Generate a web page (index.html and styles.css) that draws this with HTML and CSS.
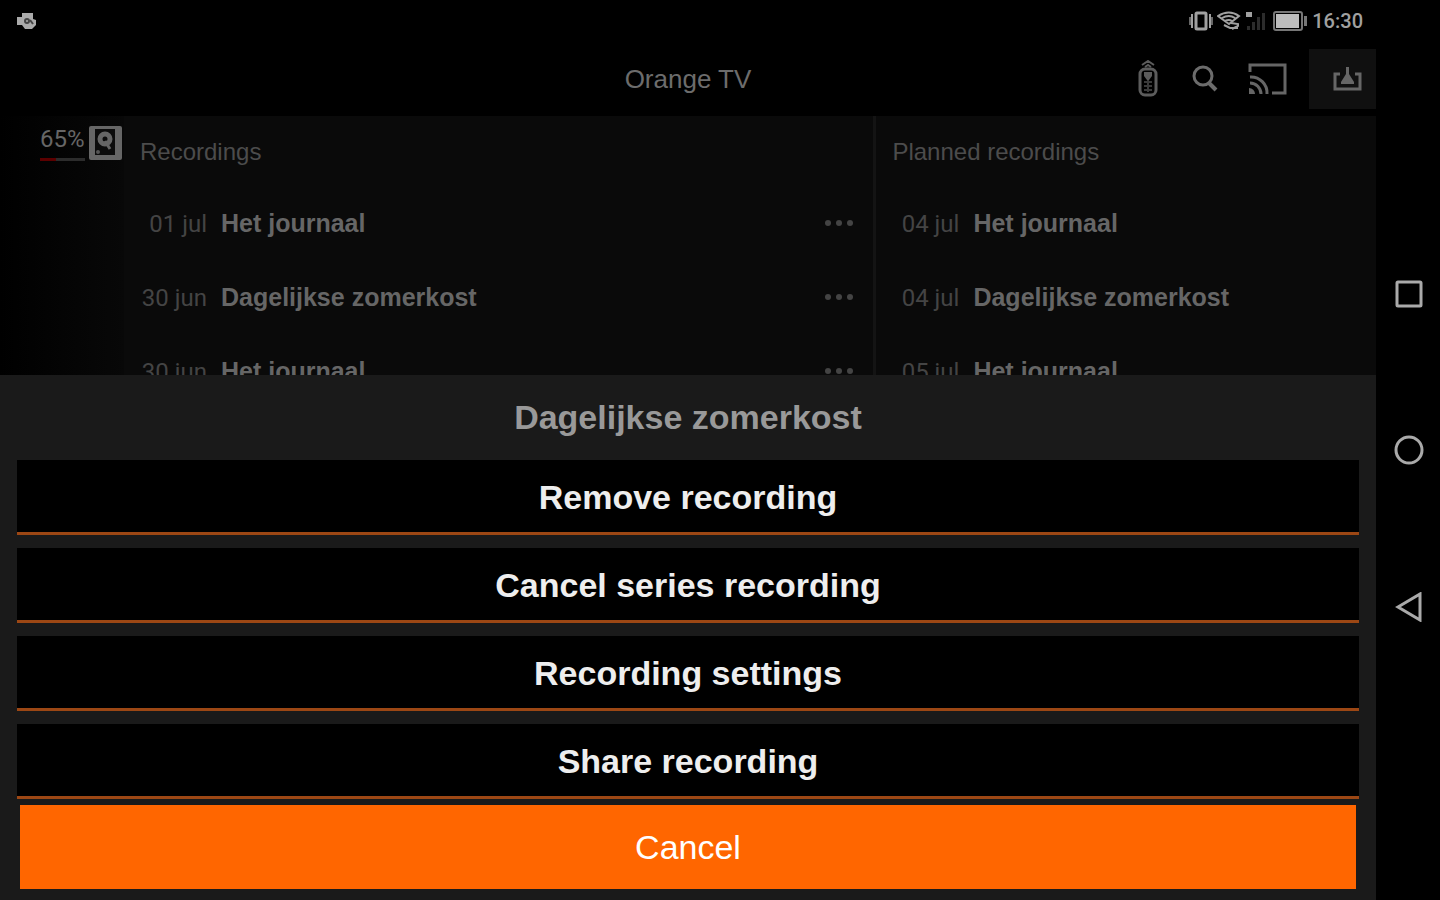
FILE: index.html
```
<!DOCTYPE html>
<html lang="en">

<head>
    <meta charset="UTF-8">
    <meta name="viewport" content="width=device-width, initial-scale=1.0">
    <title>Orange TV</title>
    <link rel="stylesheet" href="styles.css">
</head>

<body>
    <div class="screen">
        <div class="status-bar">
            <svg class="camera" width="22" height="18" viewBox="0 0 22 18">
                <path fill="#aaa" d="M1 5h5V1h11v6l3 1v5l-4 4H9l-3-4H1z" />
                <circle cx="11" cy="9" r="2" fill="none" stroke="#444" stroke-width="2" />
                <path d="M14 8l3 4" stroke="#444" stroke-width="2" />
            </svg>
            <div class="status-icons">
                <svg width="24" height="20" viewBox="0 0 24 20" fill="none" stroke="#a0a0a0" stroke-width="2">
                    <rect x="7" y="2" width="10" height="16" rx="1" stroke-width="3" />
                    <path d="M3 3v14M21 3v14" />
                    <path stroke="#666" d="M1 6v8M23 6v8" />
                </svg>
                <svg width="24" height="20" viewBox="0 0 24 20" fill="none" stroke="#a0a0a0" stroke-width="2">
                    <path d="M1 5Q12-2 22 5L12 13zM5 7q7-4 13 0M8 10q4-2 7 0" />
                    <path d="M7 14l6 3h8M14 12l7 1v2l-6 3" />
                </svg>
                <svg class="signal" width="22" height="20" viewBox="0 0 22 20">
                    <path fill="#a0a0a0" d="M1 1h6v5H1z" />
                    <path fill="#2c2c2c" d="M2 15h3v4H2zM7 11h3v8H7zM12 6h3v13h-3zM17 2h3v17h-3z" />
                </svg>
                <svg class="battery" width="35" height="20" viewBox="0 0 35 20">
                    <rect x="1" y="1" width="28" height="18" rx="2" fill="none" stroke="#777" stroke-width="2" />
                    <path fill="#bdbdbd" d="M3 3h23v14H3z" />
                    <path fill="#777" d="M31 5h3v10h-3z" />
                </svg>
                <span class="clock">16:30</span>
            </div>
        </div>

        <header>
            <h1>Orange TV</h1>
            <div class="tools">
                <button class="remote" aria-label="Remote">
                    <svg width="20" height="38" viewBox="0 0 20 38" fill="none" stroke="#5c5c5c" stroke-width="2">
                        <rect x="2" y="9" width="16" height="26" rx="5" stroke-width="3" />
                        <path d="M4 5l6-4 6 4M7 7l3-2 3 2" />
                        <path fill="#5c5c5c" stroke="none" d="M6 12h8v4l-3 4H9l-3-4z" />
                        <path stroke="#3a3a3a" d="M6 22h8M6 26h8M6 30h8M10 20v12" />
                    </svg>
                </button>
                <button class="search" aria-label="Search">
                    <svg width="26" height="28" viewBox="0 0 26 28" fill="none" stroke="#6c6c6c" stroke-width="3">
                        <circle cx="11" cy="11" r="9" />
                        <path stroke-width="4" d="M17 18l7 7" />
                    </svg>
                </button>
                <button class="cast" aria-label="Cast">
                    <svg width="40" height="32" viewBox="0 0 40 32" fill="none" stroke="#666" stroke-width="3">
                        <path d="M2 9V2h35v28H24" />
                        <path d="M2 14a16 16 0 0 1 17 17M2 20a11 11 0 0 1 11 11" />
                        <path fill="#666" stroke="none" d="M1 25a6 6 0 0 1 6 6H1z" />
                    </svg>
                </button>
                <button class="recordings" aria-label="Recordings">
                    <svg width="30" height="26" viewBox="0 0 30 26" fill="none" stroke="#666" stroke-width="3">
                        <path d="M8 8H3v15h25V8h-5" />
                        <path fill="#666" stroke="none" d="M14 1h3v7l5 8v2H9v-2l5-8z" />
                    </svg>
                </button>
            </div>
        </header>

        <main>
            <aside>
                <div class="storage">
                    <span>65%</span>
                    <div class="meter"><div class="used"></div></div>
                </div>
                <svg class="disk" width="36" height="36" viewBox="0 0 36 36">
                    <rect x="1" y="1" width="33" height="34" rx="2" fill="#666" />
                    <path fill="#0c0c0c" d="M7 4h20v26H7z" />
                    <circle cx="17" cy="14" r="5" fill="none" stroke="#666" stroke-width="5" />
                    <path d="M17 16l5 8" stroke="#666" stroke-width="3" />
                    <circle cx="10" cy="27" r="2" fill="#555" />
                </svg>
            </aside>

            <section class="recorded">
                <h2>Recordings</h2>
                <ul>
                    <li><span class="date">01 jul</span><b>Het journaal</b>
                        <button class="more" aria-label="More"><i></i><i></i><i></i></button></li>
                    <li><span class="date">30 jun</span><b>Dagelijkse zomerkost</b>
                        <button class="more" aria-label="More"><i></i><i></i><i></i></button></li>
                    <li><span class="date">30 jun</span><b>Het journaal</b>
                        <button class="more" aria-label="More"><i></i><i></i><i></i></button></li>
                </ul>
            </section>

            <section class="planned">
                <h2>Planned recordings</h2>
                <ul>
                    <li><span class="date">04 jul</span><b>Het journaal</b></li>
                    <li><span class="date">04 jul</span><b>Dagelijkse zomerkost</b></li>
                    <li><span class="date">05 jul</span><b>Het journaal</b></li>
                </ul>
            </section>
        </main>

        <div class="sheet">
            <h2>Dagelijkse zomerkost</h2>
            <div class="actions">
                <button>Remove recording</button>
                <button>Cancel series recording</button>
                <button>Recording settings</button>
                <button>Share recording</button>
            </div>
            <button class="cancel">Cancel</button>
        </div>
    </div>

    <nav>
        <button aria-label="Recent apps">
            <svg width="28" height="28" viewBox="0 0 28 28" fill="none" stroke="#aaa" stroke-width="3">
                <rect x="2" y="2" width="24" height="24" rx="1" />
            </svg>
        </button>
        <button aria-label="Home">
            <svg width="30" height="30" viewBox="0 0 30 30" fill="none" stroke="#aaa" stroke-width="3">
                <circle cx="15" cy="15" r="13" />
            </svg>
        </button>
        <button aria-label="Back">
            <svg width="28" height="30" viewBox="0 0 28 30" fill="none" stroke="#aaa" stroke-width="3">
                <path d="M3 15L25 2v26z" />
            </svg>
        </button>
    </nav>
</body>

</html>
```
FILE: styles.css
```
* {
    box-sizing: border-box;
}

body {
    margin: 0;
    height: 100vh;
    display: flex;
    background-color: #000;
    color: #666;
    font-family: "Liberation Sans", Arial, sans-serif;
}

button {
    border: none;
    padding: 0;
    background: none;
    color: inherit;
    font: inherit;
}

svg {
    display: block;
}

h1,
h2,
ul {
    margin: 0;
    padding: 0;
}

.screen {
    position: relative;
    flex: 1;
    display: flex;
    flex-direction: column;
    overflow: hidden;
}

.status-bar {
    height: 42px;
    padding: 0 13px 0 16px;
    display: flex;
    justify-content: space-between;
    align-items: center;
}

.status-icons {
    display: flex;
    align-items: center;
    gap: 4px;
}

.battery {
    margin-left: 2px;
}

.clock {
    font: 500 20px/24px Roboto, sans-serif;
    color: #a0a0a0;
}

header {
    height: 74px;
    display: grid;
    grid-template-columns: 1fr auto 1fr;
    align-items: center;
}

header h1 {
    grid-column: 2;
    font-size: 26px;
    font-weight: normal;
    color: #6c6c6c;
}

.tools {
    display: flex;
    justify-content: flex-end;
    align-items: center;
}

.remote {
    margin-right: 34px;
}

.search {
    margin-right: 30px;
}

.cast {
    margin-right: 21px;
}

.recordings {
    width: 67px;
    height: 60px;
    padding-left: 23px;
    background-color: #101010;
}

main {
    flex: 1;
    display: flex;
    background-color: #0a0a0a;
}

aside {
    width: 124px;
    padding: 9px 0 0 40px;
    display: flex;
    gap: 3px;
    background: linear-gradient(to right, #000, #080808);
}

.storage {
    width: 45px;
    font: 24px/28px Roboto, sans-serif;
}

.meter {
    height: 3px;
    margin-top: 5px;
    background-color: #2c2c2c;
}

.used {
    width: 35%;
    height: 3px;
    background-color: #5c0000;
}

section h2 {
    height: 70px;
    padding-left: 16px;
    font-size: 24px;
    font-weight: normal;
    line-height: 72px;
    color: #4c4c4c;
}

.recorded {
    flex: 3;
    border-right: 3px solid #141414;
}

.planned {
    flex: 2;
}

ul {
    list-style: none;
}

li {
    height: 74px;
    padding: 0 20px 0 10px;
    display: flex;
    align-items: center;
    font-size: 25px;
    color: #666;
}

.date {
    width: 73px;
    margin-right: 14px;
    padding-top: 2px;
    text-align: right;
    font: 24px Roboto, sans-serif;
    color: #444;
}

.more {
    margin-left: auto;
    display: flex;
    gap: 5px;
}

.more i {
    width: 6px;
    height: 6px;
    border-radius: 50%;
    background-color: #444;
}

.sheet {
    position: absolute;
    left: 0;
    right: 0;
    bottom: 0;
    padding: 0 17px 11px;
    background-color: #1a1a1a;
}

.sheet h2 {
    font-size: 34px;
    line-height: 85px;
    text-align: center;
    color: #999;
}

.actions {
    display: flex;
    flex-direction: column;
    gap: 13px;
}

.actions button {
    height: 75px;
    padding-top: 2px;
    border-bottom: 3px solid #9c4714;
    background-color: #000;
    color: #eee;
    font-size: 34px;
    font-weight: bold;
}

.cancel {
    display: block;
    width: calc(100% - 6px);
    height: 84px;
    margin: 6px auto 0;
    background-color: #ff6600;
    color: #fff;
    font-size: 34px;
}

nav {
    width: 64px;
    padding: 2px 0 0 2px;
    display: flex;
    flex-direction: column;
    justify-content: center;
    align-items: center;
    gap: 127px;
}
```
